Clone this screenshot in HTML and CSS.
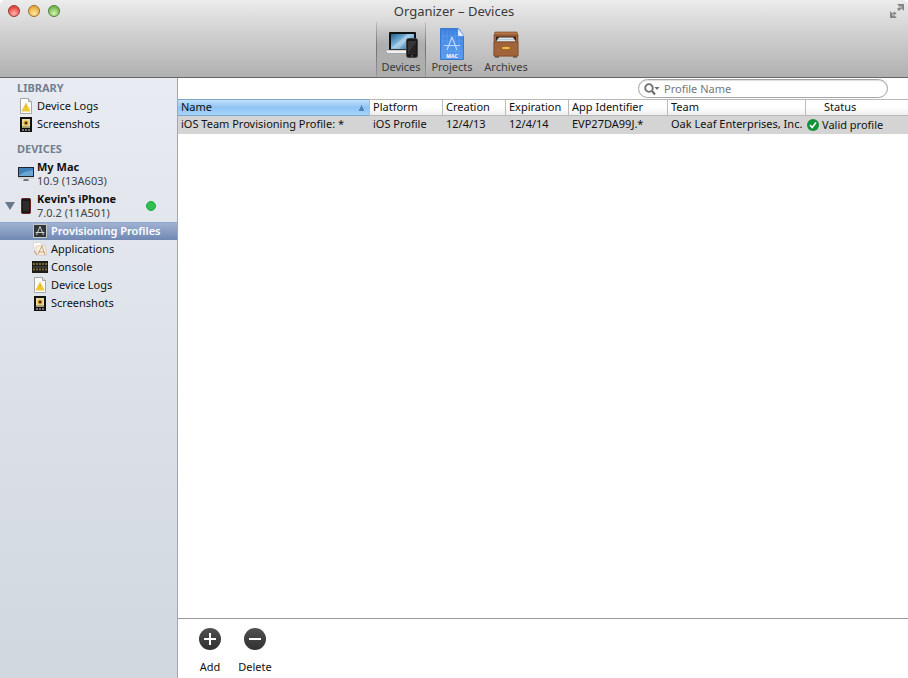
FILE: index.html
```
<!DOCTYPE html>
<html lang="en">
<head>
<meta charset="utf-8">
<title>Organizer – Devices</title>
<link rel="stylesheet" href="styles.css">
</head>
<body>
<svg class="defs" aria-hidden="true">
  <defs>
    <linearGradient id="screen" x1="0" y1="0" x2="1" y2="1"><stop offset="0" stop-color="#1f5f96"/><stop offset=".5" stop-color="#8fc4e4"/><stop offset="1" stop-color="#2b6ca6"/></linearGradient>
    <linearGradient id="blue" x1="0" y1="0" x2="0" y2="1"><stop offset="0" stop-color="#3c7fe0"/><stop offset="1" stop-color="#5a9df0"/></linearGradient>
    <linearGradient id="wood" x1="0" y1="0" x2="0" y2="1"><stop offset="0" stop-color="#a8683c"/><stop offset="1" stop-color="#8c4f2a"/></linearGradient>
    <linearGradient id="dark" x1="0" y1="0" x2="0" y2="1"><stop offset="0" stop-color="#505050"/><stop offset="1" stop-color="#303030"/></linearGradient>
    <symbol id="log" viewBox="0 0 16 16">
      <path d="M2.5.5h8l3 3v12h-11z" fill="#fcfcf8" stroke="#a5a7a8"/>
      <path d="M10.500.5v3h3" fill="#ddd" stroke="#a5a7a8"/>
      <path d="M8 5.500l4 7.500H4z" fill="#f6d02c" stroke="#e8c548" stroke-linejoin="round"/>
      <path d="M8 8v2.500M8 11.300v1" stroke="#d9a61c"/>
    </symbol>
    <symbol id="shot" viewBox="0 0 16 16">
      <rect x="2" y="1" width="12" height="15" fill="#111"/>
      <rect x="4" y="3" width="8" height="9" fill="#e9dca4"/>
      <circle cx="8" cy="7" r="2.500" fill="#d89b25"/><circle cx="8" cy="7" r="1.200" fill="#3a2508"/>
      <path d="M4 11h8" stroke="#6b6a44"/>
      <path d="M4 14h2M7 14h2M10 14h2" stroke="#ddd"/>
    </symbol>
  </defs>
</svg>
<div class="window">
  <header class="toolbar">
    <div class="titlebar">
      <div class="lights">
        <button class="light red" aria-label="Close"></button>
        <button class="light amber" aria-label="Minimize"></button>
        <button class="light green" aria-label="Zoom"></button>
      </div>
      <h1>Organizer – Devices</h1>
      <button class="expand" aria-label="Full screen">
        <svg width="16" height="16" viewBox="0 0 16 16" fill="#858585"><path d="M8 1h7v7l-2.500-2.500-2.500 2.500-2-2 2.500-2.500zM8 15H1V8l2.500 2.500L5.500 8.500l2 2-2 2z"/><path d="M9 4h4M3 12h4" stroke="#d8d8d8"/></svg>
      </button>
    </div>
    <nav class="tabs">
      <button class="tab active">
        <svg width="34" height="32" viewBox="0 0 34 32">
          <rect x="5" y="4" width="27" height="19" rx="1" fill="#111"/>
          <rect x="7" y="6" width="23" height="15" fill="url(#screen)"/>
          <path d="M8 20L23 6h5L15 21z" fill="#fff" opacity=".25"/>
          <path d="M2 22h28v2q-1 1.500-3 1.500H5q-3 0-3-2z" fill="#f0f0f0" stroke="#8b8b8b" stroke-width=".6"/>
          <rect x="22.500" y="10.500" width="11" height="19" rx="2" fill="#191919" stroke="#444"/>
          <rect x="24" y="13" width="8" height="13" fill="#353535"/><path d="M24 25l8-10v11z" fill="#222"/>
          <circle cx="28" cy="27.800" r="1" fill="#555"/>
        </svg>
        <span>Devices</span>
      </button>
      <button class="tab">
        <svg width="34" height="32" viewBox="0 0 34 32">
          <path d="M5.500.5h18l5 7v24h-23z" fill="url(#blue)" stroke="#3b78cc"/>
          <path d="M8 3v26M12 3v26M16 3v26M20 3v26M24 8v21M6 8h22M6 13h22M6 18h22M6 23h22" stroke="#6ba4ee" stroke-width=".5"/>
          <path d="M23 .5l6 7.500h-6z" fill="#eaf3ff" stroke="#8eb5e8" stroke-width=".5"/>
          <path d="M17 9l-5 13M17 9l5 13M9 17.500h16" stroke="#b9d7ff" fill="none" stroke-width="1.200"/>
          <text x="17" y="30" class="mac">MAC</text>
        </svg>
        <span>Projects</span>
      </button>
      <button class="tab">
        <svg width="34" height="32" viewBox="0 0 34 32">
          <path d="M6 4h22l1 4H5z" fill="#b5774a" stroke="#704020" stroke-width=".6"/>
          <path d="M5 7h24v21H5z" fill="url(#wood)" stroke="#6b3c1d" stroke-width=".6"/>
          <path d="M7 8.500h20v5H7z" fill="#3c2415"/>
          <path d="M7 13.500l3-4h14l3 4z" fill="#dce8ed"/><path d="M9 11.500h16" stroke="#9bb7c5" stroke-width=".6"/>
          <path d="M5 14h24v14H5z" fill="#a1643a" stroke="#73431f" stroke-width=".6"/>
          <path d="M13 18.500h8v3h-8z" fill="#f0b941" stroke="#85581e" stroke-width=".6"/>
          <path d="M6 29h4M24 29h4" stroke="#4c2a15"/>
        </svg>
        <span>Archives</span>
      </button>
    </nav>
  </header>

  <aside class="sidebar">
    <h2>LIBRARY</h2>
    <a class="item" href="#logs"><svg class="icon"><use href="#log"/></svg>Device Logs</a>
    <a class="item" href="#shots"><svg class="icon"><use href="#shot"/></svg>Screenshots</a>
    <h2 class="second">DEVICES</h2>
    <a class="device" href="#mac">
      <svg class="icon" viewBox="0 0 16 16"><rect width="16" height="12" y="1" fill="#1b252e"/><rect x="1" y="2" width="14" height="8" fill="#3f80b8"/><path d="M1 9l6-3 8-2v6H1z" fill="#6ca7d3"/><path d="M0 11h16v2H0z" fill="#d2d4d6"/><path d="M6 13h4l1 2H5z" fill="#74797d"/></svg>
      <span class="about"><strong>My Mac</strong><small>10.9 (13A603)</small></span>
    </a>
    <a class="device phone" href="#iphone">
      <svg class="twist" width="10" height="8" viewBox="0 0 10 8"><path d="M0 0h10L5 8z" fill="#68798a"/></svg>
      <svg class="icon" viewBox="0 0 16 16"><rect x="3.500" y=".5" width="9" height="15" rx="1" fill="#17191b" stroke="#6b2323"/><rect x="5" y="3" width="6" height="10" fill="#2b2d2f"/></svg>
      <span class="about"><strong>Kevin's iPhone</strong><small>7.0.2 (11A501)</small></span>
      <i class="online"></i>
    </a>
    <a class="item child selected" href="#profiles"><svg class="icon" viewBox="0 0 16 16"><rect x="1.500" y="1.500" width="13" height="13" fill="#333639" stroke="#c3c6c8"/><path d="M8 3.500L4.500 12M8 3.500l3.500 8.500M3.500 9.500h9" stroke="#ccc" fill="none"/></svg>Provisioning Profiles</a>
    <a class="item child" href="#apps"><svg class="icon" viewBox="0 0 16 16"><path d="M1 2l8-1 1 8-7 2z" fill="#fff" stroke="#d0c8bc" stroke-width=".6"/><path d="M4 5l9-1 2 10H4z" fill="#f6efe2" stroke="#cdbda5" stroke-width=".6"/><path d="M10 5l-4 8M10 5l3 9M6 11h7" stroke="#c9a37c" fill="none"/><path d="M2 10l3 4" stroke="#dc8a78"/></svg>Applications</a>
    <a class="item child" href="#console"><svg class="icon" viewBox="0 0 16 16"><path d="M0 2h16v12H0z" fill="#1d1c17"/><path d="M1 5h14M1 10.500h14" stroke="#786d38" stroke-width="2" stroke-dasharray="2 1"/><path d="M1 8h14" stroke="#555"/></svg>Console</a>
    <a class="item child" href="#dlogs"><svg class="icon"><use href="#log"/></svg>Device Logs</a>
    <a class="item child" href="#dshots"><svg class="icon"><use href="#shot"/></svg>Screenshots</a>
  </aside>

  <main class="content">
    <div class="filter">
      <label class="search">
        <svg width="18" height="14" viewBox="0 0 18 14"><circle cx="5" cy="6" r="3.800" fill="none" stroke="#6e6e6e" stroke-width="1.800"/><path d="M8 9l3 3.500" stroke="#6e6e6e" stroke-width="2.200"/><path d="M10.500 5h5l-2.500 3z" fill="#6e6e6e"/></svg>
        <input type="search" placeholder="Profile Name" aria-label="Profile Name">
      </label>
    </div>
    <div class="list">
      <table>
        <colgroup><col class="c-name"><col class="c-platform"><col class="c-date"><col class="c-date"><col class="c-app"><col class="c-team"><col></colgroup>
        <thead><tr><th class="sorted">Name</th><th>Platform</th><th>Creation</th><th>Expiration</th><th>App Identifier</th><th>Team</th><th class="status">Status</th></tr></thead>
        <tbody><tr><td>iOS Team Provisioning Profile: *</td><td>iOS Profile</td><td>12/4/13</td><td>12/4/14</td><td>EVP27DA99J.*</td><td>Oak Leaf Enterprises, Inc.</td>
          <td class="valid"><span><svg width="12" height="12" viewBox="0 0 12 12"><circle cx="6" cy="6" r="6" fill="#149238"/><path d="M3 6l2.200 2.500L9 3.500" fill="none" stroke="#fff" stroke-width="1.600"/></svg>Valid profile</span></td></tr></tbody>
      </table>
    </div>
    <footer class="actions">
      <button class="action"><svg width="22" height="22" viewBox="0 0 22 22"><circle cx="11" cy="11" r="11" fill="url(#dark)"/><path d="M5 11h12M11 5v12" stroke="#fff" stroke-width="2"/></svg>Add</button>
      <button class="action"><svg width="22" height="22" viewBox="0 0 22 22"><circle cx="11" cy="11" r="11" fill="url(#dark)"/><path d="M5 11h12" stroke="#fff" stroke-width="2"/></svg>Delete</button>
    </footer>
  </main>
</div>
</body>
</html>
```
FILE: styles.css
```
* { box-sizing: border-box; }
body {
  margin: 0;
  font: 11px/16px "Lucida Grande", "Noto Sans", "Open Sans", sans-serif;
  color: #111;
  background: #fff;
}
button { border: 0; padding: 0; background: none; font: inherit; color: inherit; }
a { color: inherit; text-decoration: none; }
svg { display: block; flex: none; }
.defs { position: absolute; width: 0; height: 0; }

.window {
  display: grid;
  grid-template: auto 1fr / 178px 1fr;
  min-height: 100vh;
}

.toolbar {
  grid-column: 1 / -1;
  background: linear-gradient(#ececec, #d2d2d2 40%, #b0b0b0);
  border-bottom: 1px solid #666;
  border-radius: 5px 5px 0 0;
}
.titlebar {
  display: grid;
  grid-template-columns: 1fr auto 1fr;
  align-items: center;
  height: 22px;
  padding: 0 3px;
}
.titlebar h1 { margin: 0; font-size: 13px; font-weight: 400; color: #3a3a3a; }
.lights { display: flex; gap: 8px; padding-left: 5px; }
.light {
  width: 12px;
  height: 12px;
  border-radius: 50%;
  border: 1px solid;
}
.red { background: radial-gradient(circle at 50% 75%, #ffb5ad, #e8453f 70%); border-color: #963c38; }
.amber { background: radial-gradient(circle at 50% 75%, #ffe9a0, #ecac40 70%); border-color: #986c2b; }
.green { background: radial-gradient(circle at 50% 75%, #d3f5b0, #78b850 70%); border-color: #4e7b38; }
.expand { justify-self: end; }

.tabs { display: flex; justify-content: center; padding-left: 2px; }
.tab {
  display: flex;
  flex-direction: column;
  align-items: center;
  width: 52px;
  height: 55px;
  padding-top: 6px;
  color: #3a3a3a;
}
.tab:last-child { width: 56px; }
.tab span { line-height: 14px; }
.tab.active {
  width: 50px;
  background: linear-gradient(rgba(0,0,0,0), rgba(0,0,0,.13) 40%, rgba(0,0,0,.02));
  border: solid;
  border-width: 0 1px;
  border-image: linear-gradient(rgba(0,0,0,.1), rgba(0,0,0,.35), rgba(0,0,0,.1)) 1;
}
.mac { font: bold 5px "Noto Sans", sans-serif; fill: #fff; text-anchor: middle; }

.sidebar {
  background: linear-gradient(#e8ebf1, #e0e4eb 35%, #d0d7df);
  border-right: 1px solid #a3a7ab;
}
.sidebar h2 {
  margin: 2px 0 1px 17px;
  font-size: 11px;
  font-weight: 700;
  color: #728090;
}
.sidebar h2.second { margin-top: 8px; }
.item { display: flex; align-items: center; gap: 3px; height: 18px; padding-left: 18px; }
.icon { width: 16px; height: 16px; }
.child { padding-left: 32px; }
.selected {
  background: linear-gradient(#91a5c6 1px, #a0b2d1 1px, #6f88b3);
  color: #fff;
  font-weight: 600;
}
.device { display: flex; align-items: center; gap: 3px; height: 32px; padding: 0 21px 0 18px; }
.device.phone { padding-left: 5px; }
.about { display: flex; flex-direction: column; line-height: 14px; }
.about small { font-size: 11px; color: #444; }
.online {
  width: 10px;
  height: 10px;
  margin-left: auto;
  border-radius: 50%;
  background: #2fc050;
  border: 1px solid #1fa83f;
}

.content { display: flex; flex-direction: column; min-width: 0; }
.filter { display: flex; justify-content: flex-end; padding: 1px 20px 1px 0; }
.search {
  display: flex;
  align-items: center;
  gap: 2px;
  width: 250px;
  height: 19px;
  padding: 0 5px;
  border: 1px solid #a5a5a5;
  border-radius: 10px;
  box-shadow: inset 0 1px 1px #ddd;
}
.search input {
  flex: 1;
  min-width: 0;
  border: 0;
  padding: 0;
  outline: 0;
  background: none;
  font: inherit;
}
.search input::placeholder { color: #777; }

.list { flex: 1; }
table { width: 100%; table-layout: fixed; border-collapse: separate; border-spacing: 0; }
.c-name { width: 191px; }
.c-platform { width: 73px; }
.c-date { width: 63px; }
.c-app { width: 99px; }
.c-team { width: 138px; }
th, td { padding: 0 0 0 4px; text-align: left; font-weight: 400; white-space: nowrap; }
th:first-child, td:first-child { padding-left: 3px; }
th {
  height: 17px;
  line-height: 14px;
  vertical-align: top;
  border-top: 1px solid #b8b8b8;
  border-bottom: 1px solid #b8b8b8;
  background: linear-gradient(90deg, #bbb, #bbb) 0 / 1px 100% no-repeat, linear-gradient(#fff, #fff 50%, #eee);
}
th.sorted {
  background:
    conic-gradient(from 153deg at 50% 0, #5485ba 54deg, transparent 0) right 4px top 5px / 7px 6px no-repeat,
    linear-gradient(#c3e0f9, #8fc5f5 50%, #a5d4fa);
  border-color: #7da7cd;
}
th.status { padding-left: 19px; }
td { height: 18px; line-height: 16px; padding-bottom: 2px; background: #d4d4d4; }
td.valid { padding: 0 0 0 2px; }
.valid span { display: flex; align-items: center; gap: 3px; }

.actions {
  display: flex;
  gap: 1px;
  height: 60px;
  padding: 9px 10px 0;
  border-top: 1px solid #999;
}
.action { display: flex; flex-direction: column; align-items: center; gap: 9px; width: 44px; }
```
